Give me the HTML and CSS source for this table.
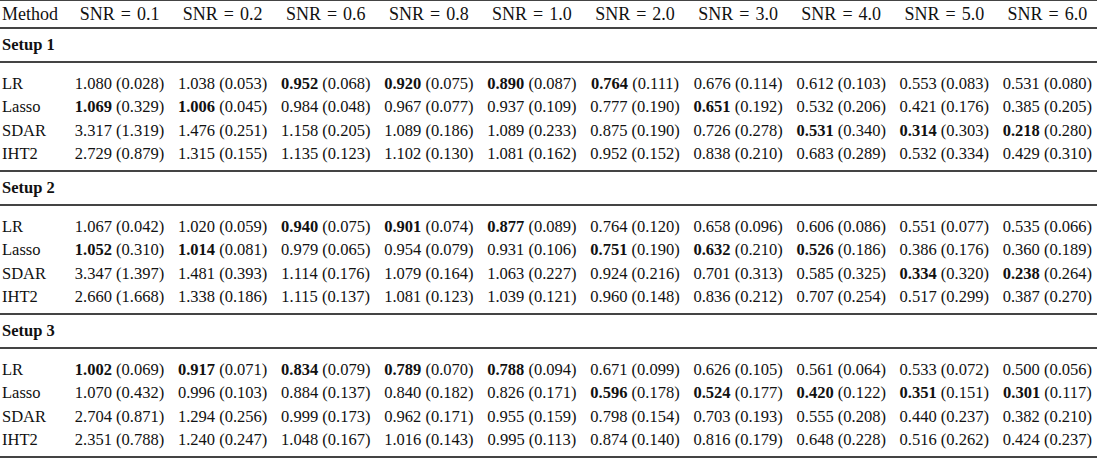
FILE: index.html
```html
<!DOCTYPE html>
<html>
<head>
<meta charset="utf-8">
<link rel="stylesheet" href="styles.css">
</head>
<body>
<table class="results">
<colgroup>
<col class="c-method">
<col span="10" class="c-val">
</colgroup>
<thead>
<tr class="head">
<th class="method">Method</th>
<th>SNR<span class="eq">=</span>0.1</th>
<th>SNR<span class="eq">=</span>0.2</th>
<th>SNR<span class="eq">=</span>0.6</th>
<th>SNR<span class="eq">=</span>0.8</th>
<th>SNR<span class="eq">=</span>1.0</th>
<th>SNR<span class="eq">=</span>2.0</th>
<th>SNR<span class="eq">=</span>3.0</th>
<th>SNR<span class="eq">=</span>4.0</th>
<th>SNR<span class="eq">=</span>5.0</th>
<th>SNR<span class="eq">=</span>6.0</th>
</tr>
</thead>
<tbody class="block">
<tr class="setup"><td colspan="11">Setup 1</td></tr>
<tr class="first"><td class="method">LR</td><td>1.080 (0.028)</td><td>1.038 (0.053)</td><td><b>0.952</b> (0.068)</td><td><b>0.920</b> (0.075)</td><td><b>0.890</b> (0.087)</td><td><b>0.764</b> (0.111)</td><td>0.676 (0.114)</td><td>0.612 (0.103)</td><td>0.553 (0.083)</td><td>0.531 (0.080)</td></tr>
<tr><td class="method">Lasso</td><td><b>1.069</b> (0.329)</td><td><b>1.006</b> (0.045)</td><td>0.984 (0.048)</td><td>0.967 (0.077)</td><td>0.937 (0.109)</td><td>0.777 (0.190)</td><td><b>0.651</b> (0.192)</td><td>0.532 (0.206)</td><td>0.421 (0.176)</td><td>0.385 (0.205)</td></tr>
<tr><td class="method">SDAR</td><td>3.317 (1.319)</td><td>1.476 (0.251)</td><td>1.158 (0.205)</td><td>1.089 (0.186)</td><td>1.089 (0.233)</td><td>0.875 (0.190)</td><td>0.726 (0.278)</td><td><b>0.531</b> (0.340)</td><td><b>0.314</b> (0.303)</td><td><b>0.218</b> (0.280)</td></tr>
<tr class="last"><td class="method">IHT2</td><td>2.729 (0.879)</td><td>1.315 (0.155)</td><td>1.135 (0.123)</td><td>1.102 (0.130)</td><td>1.081 (0.162)</td><td>0.952 (0.152)</td><td>0.838 (0.210)</td><td>0.683 (0.289)</td><td>0.532 (0.334)</td><td>0.429 (0.310)</td></tr>
</tbody>
<tbody class="block">
<tr class="setup"><td colspan="11">Setup 2</td></tr>
<tr class="first"><td class="method">LR</td><td>1.067 (0.042)</td><td>1.020 (0.059)</td><td><b>0.940</b> (0.075)</td><td><b>0.901</b> (0.074)</td><td><b>0.877</b> (0.089)</td><td>0.764 (0.120)</td><td>0.658 (0.096)</td><td>0.606 (0.086)</td><td>0.551 (0.077)</td><td>0.535 (0.066)</td></tr>
<tr><td class="method">Lasso</td><td><b>1.052</b> (0.310)</td><td><b>1.014</b> (0.081)</td><td>0.979 (0.065)</td><td>0.954 (0.079)</td><td>0.931 (0.106)</td><td><b>0.751</b> (0.190)</td><td><b>0.632</b> (0.210)</td><td><b>0.526</b> (0.186)</td><td>0.386 (0.176)</td><td>0.360 (0.189)</td></tr>
<tr><td class="method">SDAR</td><td>3.347 (1.397)</td><td>1.481 (0.393)</td><td>1.114 (0.176)</td><td>1.079 (0.164)</td><td>1.063 (0.227)</td><td>0.924 (0.216)</td><td>0.701 (0.313)</td><td>0.585 (0.325)</td><td><b>0.334</b> (0.320)</td><td><b>0.238</b> (0.264)</td></tr>
<tr class="last"><td class="method">IHT2</td><td>2.660 (1.668)</td><td>1.338 (0.186)</td><td>1.115 (0.137)</td><td>1.081 (0.123)</td><td>1.039 (0.121)</td><td>0.960 (0.148)</td><td>0.836 (0.212)</td><td>0.707 (0.254)</td><td>0.517 (0.299)</td><td>0.387 (0.270)</td></tr>
</tbody>
<tbody class="block">
<tr class="setup"><td colspan="11">Setup 3</td></tr>
<tr class="first"><td class="method">LR</td><td><b>1.002</b> (0.069)</td><td><b>0.917</b> (0.071)</td><td><b>0.834</b> (0.079)</td><td><b>0.789</b> (0.070)</td><td><b>0.788</b> (0.094)</td><td>0.671 (0.099)</td><td>0.626 (0.105)</td><td>0.561 (0.064)</td><td>0.533 (0.072)</td><td>0.500 (0.056)</td></tr>
<tr><td class="method">Lasso</td><td>1.070 (0.432)</td><td>0.996 (0.103)</td><td>0.884 (0.137)</td><td>0.840 (0.182)</td><td>0.826 (0.171)</td><td><b>0.596</b> (0.178)</td><td><b>0.524</b> (0.177)</td><td><b>0.420</b> (0.122)</td><td><b>0.351</b> (0.151)</td><td><b>0.301</b> (0.117)</td></tr>
<tr><td class="method">SDAR</td><td>2.704 (0.871)</td><td>1.294 (0.256)</td><td>0.999 (0.173)</td><td>0.962 (0.171)</td><td>0.955 (0.159)</td><td>0.798 (0.154)</td><td>0.703 (0.193)</td><td>0.555 (0.208)</td><td>0.440 (0.237)</td><td>0.382 (0.210)</td></tr>
<tr class="last"><td class="method">IHT2</td><td>2.351 (0.788)</td><td>1.240 (0.247)</td><td>1.048 (0.167)</td><td>1.016 (0.143)</td><td>0.995 (0.113)</td><td>0.874 (0.140)</td><td>0.816 (0.179)</td><td>0.648 (0.228)</td><td>0.516 (0.262)</td><td>0.424 (0.237)</td></tr>
</tbody>
</table>
</body>
</html>
```

FILE: styles.css
```css
html, body {
  margin: 0;
  padding: 0;
  background: #ffffff;
  overflow: hidden;
}

body {
  font-family: "Liberation Serif", "Tinos", "Times New Roman", "Nimbus Roman", "DejaVu Serif", serif;
  color: #111111;
}

.results {
  width: 1099px;
  border-collapse: collapse;
  table-layout: fixed;
  border-top: 1px solid #444444;
}

.c-method {
  width: 68px;
}

.results th,
.results td {
  padding: 0;
  white-space: nowrap;
}

.results th {
  font-weight: normal;
  font-size: 18px;
  height: 26px;
  text-align: center;
  vertical-align: middle;
  border-bottom: 2px solid #444444;
}

.results th.method {
  text-align: left;
  padding-left: 2px;
}

.eq {
  margin: 0 6px;
}

.results td {
  font-size: 16.5px;
  height: 23.5px;
  text-align: center;
  vertical-align: middle;
}

.results td.method {
  text-align: left;
  padding-left: 2px;
}

.results b {
  font-weight: bold;
}

.setup td {
  font-weight: bold;
  text-align: left;
  padding-left: 2px;
  height: 32px;
  border-bottom: 2px solid #444444;
}

.first td {
  padding-top: 9px;
}

.last td {
  padding-bottom: 4px;
}

.block {
  border-bottom: 2px solid #444444;
}
```
